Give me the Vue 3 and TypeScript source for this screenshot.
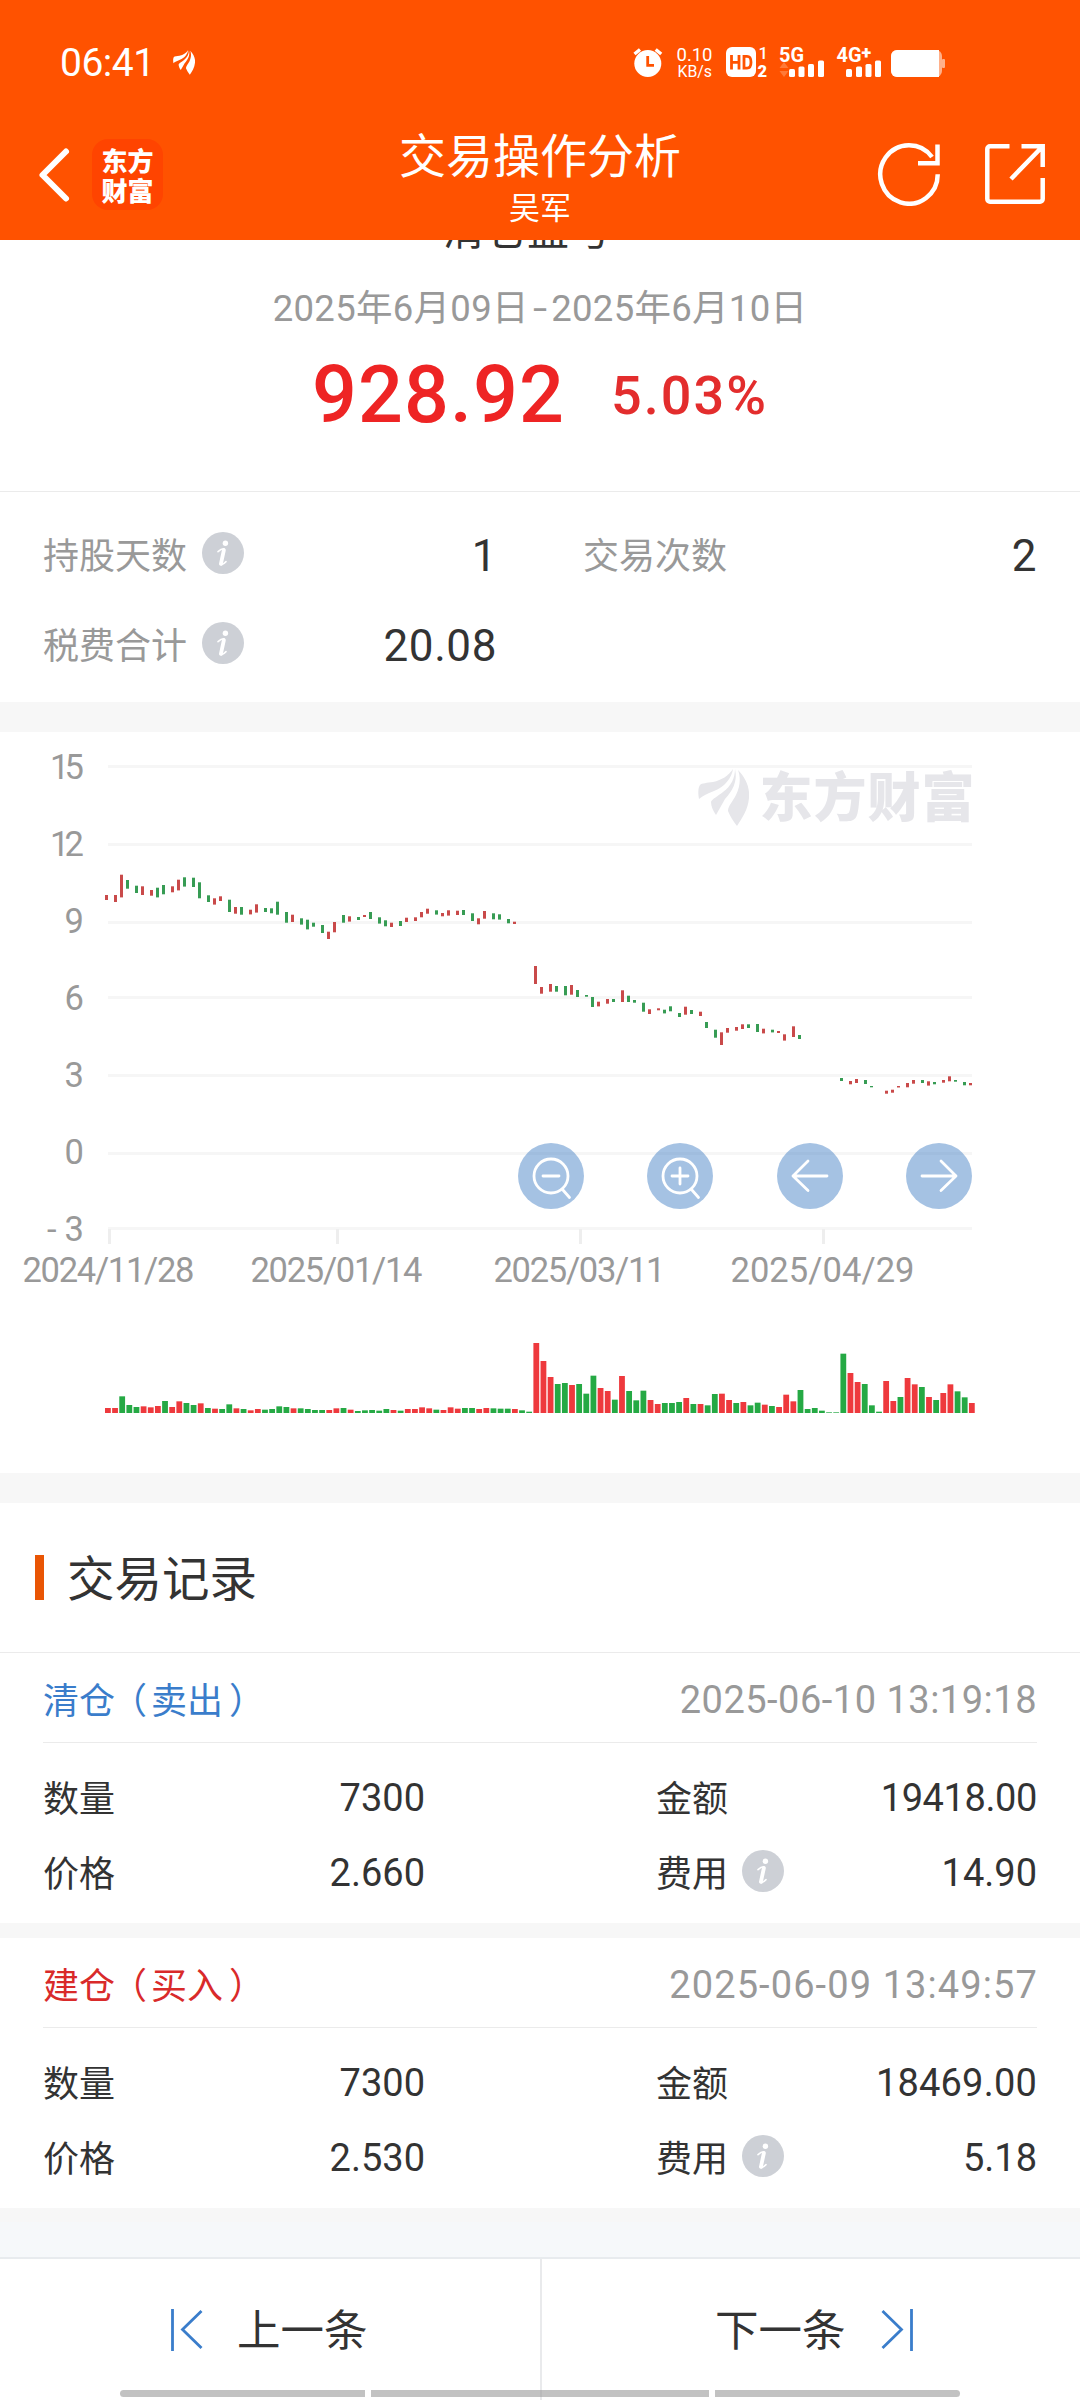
<script setup lang="ts">
type Tone = 'r' | 'g'

interface Axis { y: number; base: number; label: string; width: number }
interface Tick { x: number; label: string; width: number }
interface TradeRecord {
  kind: 'sell' | 'buy'
  title: string
  side: string
  time: string
  count: string
  amount: string
  price: string
  fee: string
}

const axes: Axis[] = [
  { y: 33, base: 46.5, label: '15', width: 34 },
  { y: 111, base: 123.5, label: '12', width: 34 },
  { y: 189, base: 201, label: '9', width: 0 },
  { y: 264, base: 277.5, label: '6', width: 0 },
  { y: 342, base: 354.5, label: '3', width: 0 },
  { y: 420, base: 431.5, label: '0', width: 0 },
  { y: 495, base: 509, label: '-3', width: 37 },
]

const ticks: Tick[] = [
  { x: 108, label: '2024/11/28', width: 172 },
  { x: 336, label: '2025/01/14', width: 172 },
  { x: 579, label: '2025/03/11', width: 172 },
  { x: 822, label: '2025/04/29', width: 184 },
]

// Each candle: left, top, height, tone
const candleData = `105 163 5 r;114 163 7 r;120 142.7 22.7 r;126 148 8.7 g;135 153.7 7.3 g;141 154.3 8.7 r;150 158 5.7 r;156 155.7 9.7 g;162 153 9.3 g;171 154.3 6 r;177 147.7 10.7 r;183 145.3 9.3 g;192 145.7 9.3 g;198 150.3 16 g;207 163.3 6.7 g;213 166.3 6.3 r;219 164.3 4.7 r;228 167.7 12.3 g;234 175 6.7 r;240 175 7.7 g;249 177.7 4.7 r;255 172.3 8.3 r;264 176 4 g;270 176.3 5 g;276 169.7 13 g;285 180 10.7 g;291 182.7 7.3 r;300 186.3 6.3 g;306 187.7 9.7 g;312 190.7 4 g;321 193 8 g;327 199.7 7.3 r;333 190 10.3 r;342 183 7.7 g;348 184.3 5.3 r;357 185 3 g;363 183 2 r;369 180 7 g;378 185.3 6.3 g;384 188.3 6 g;390 190.7 4.3 r;399 189 5 g;405 185.7 4.3 r;414 185.3 3.7 r;420 180 5.3 r;426 176.7 5 r;435 178.3 4.3 g;441 181 3.3 r;447 178.3 5.3 r;456 178.7 4.3 r;462 178 5 g;471 181.3 7.7 g;477 186.3 6 r;483 179 7.7 r;492 181.3 6 g;498 182.3 5.3 g;507 187 4.3 g;513 189.7 2.3 r;534 234 18 r;540 255 6.7 r;549 252 7.7 r;555 254 5.7 g;564 254 9.3 g;570 253 9.7 r;576 258 7 g;585 263 1.7 g;591 265 10 g;597 269.7 4.7 r;606 267 4.7 r;612 267 3 g;621 258.3 11.7 r;627 263.7 6.3 g;633 268 2.7 g;642 270.7 9 g;648 277.3 4.7 r;657 276.3 2 r;663 277.7 3.7 g;669 274.3 5 g;678 281 4 g;684 274.7 8 r;690 278 4 g;699 279.7 4.3 r;705 290 6 g;714 297.7 8 g;720 300.3 12.7 r;726 296 4.7 r;735 295 3.7 r;741 292.3 4.7 r;747 292.3 3.7 g;756 292 8 g;762 296.7 4.7 r;771 297.7 2.7 g;777 299 2 r;783 302.3 6.3 r;792 294.3 10.7 r;798 303 4 g;840 346 3 g;849 349 3.3 r;855 347 4 r;864 348 4 g;870 354 1.3 g;885 358.7 3 r;891 357.7 3 r;897 354 1.5 r;906 351 4.3 r;912 348 3.7 r;921 348 3 g;927 349.3 4.3 r;933 350 2.3 g;942 348 2.7 r;948 344.3 5 r;954 348 1.7 g;963 350 3.3 g;969 351 2.3 r`

const candles = candleData.split(';').map((row) => {
  const [x, y, h, tone] = row.split(' ')
  return { x: Number(x), y: Number(y), h: Number(h), tone: tone as Tone }
})

// Volume bars at a constant pitch; values are thirds of a pixel
const volumeData = '15r 15r 50g 24g 18g 20r 17r 21r 36g 18r 35r 30g 24g 29r 15g 13r 12g 26g 14r 12g 8r 12r 10g 12g 20g 18g 14r 14g 12g 9g 9g 9r 14r 15g 10r 6g 8g 9g 7g 12g 9r 7g 12r 12r 17r 14r 10g 9r 17r 13r 15g 15g 12r 15r 14g 13g 13g 12r 8g 4g 210r 156r 108r 87g 90g 84r 87g 58g 112g 75r 66r 40g 111r 66g 38g 67g 39r 27r 30g 30g 33g 45r 27g 27r 23g 57g 58r 39r 30g 33r 23g 31g 25r 21g 18r 55r 35r 69g 12g 15g 7g 2g 2g 178g 120r 93r 87g 23g 4g 96r 36r 48g 105r 86r 78g 48r 39g 60r 86r 65g 47g 30r'

const volumes = volumeData.split(' ').map((item, i) => {
  const h = Number(item.slice(0, -1)) / 3
  return { x: 105 + i * 7.14, y: 681 - h, h, tone: item.slice(-1) as Tone }
})

const fills: Record<Tone, string> = { r: '#c94a4a', g: '#379c54' }
const volumeFills: Record<Tone, string> = { r: '#ee393d', g: '#25a944' }

const records: TradeRecord[] = [
  { kind: 'sell', title: '清仓', side: '卖出', time: '2025-06-10 13:19:18', count: '7300', amount: '19418.00', price: '2.660', fee: '14.90' },
  { kind: 'buy', title: '建仓', side: '买入', time: '2025-06-09 13:49:57', count: '7300', amount: '18469.00', price: '2.530', fee: '5.18' },
]

const tools = ['minus', 'plus', 'left', 'right']
</script>

<template>
  <div class="screen">
    <svg width="0" height="0" class="defs">
      <symbol id="info" viewBox="0 0 42 42">
        <circle cx="21" cy="21" r="21" fill="#cdd0d6" />
        <circle cx="23.4" cy="11.3" r="2.7" fill="#fff" />
        <path d="M16 19.6C18.4 17.4 20.3 16.6 22 16.8L18.7 31.4C18.5 33.4 20.4 33.2 24 29.6" fill="none" stroke="#fff" stroke-width="1.6" stroke-linecap="round" stroke-linejoin="round" />
        <path d="M21.9 18L18.9 31.8" fill="none" stroke="#fff" stroke-width="3.8" stroke-linecap="round" />
      </symbol>
      <symbol id="wing" viewBox="0 0 51 57">
        <path d="M35 0C34 8 27 18 16 22C9 25 4 27 1 30C0 24 0 19 2 16C4 14 9 14 15 13C24 11 30 7 35 0Z" />
        <path d="M37 0C40 13 34 22 27 30C24 35 21 41 18 46C15 42 13 37 13 33C14 30 20 27 25 23C33 17 37 9 37 0Z" />
        <path d="M40 1C48 9 52 19 51 29C50 41 44 49 39 57C35 52 32 47 30 42C30 37 35 32 38 26C42 18 43 9 40 1Z" />
      </symbol>
    </svg>

    <header class="header">
      <div class="status">
        <span class="clock">06:41</span>
        <svg class="brand-mark" width="22" height="25"><use href="#wing" fill="#fff" /></svg>
        <svg class="status-icons" width="320" height="40" viewBox="630 43 320 40" fill="#fff">
          <circle cx="647.8" cy="63.5" r="13.5" />
          <path d="M634.5 54L640 49.5M661.2 54L655.7 49.5" stroke="#fff" stroke-width="3.4" />
          <path d="M647.7 56V65.3H654" fill="none" stroke="#ff5200" stroke-width="2.8" />
          <text x="676.5" y="61" font-size="19" textLength="36" lengthAdjust="spacingAndGlyphs">0.10</text>
          <text x="677.5" y="77" font-size="16" textLength="34.5" lengthAdjust="spacingAndGlyphs">KB/s</text>
          <rect x="726" y="47" width="30" height="30" rx="6" />
          <path d="M731.5 55V69.5M739 55V69.5M731.5 62.3H739M744 56.3H747C750 56.3 751 58 751 62.3C751 66.5 750 68.2 747 68.2H744Z" fill="none" stroke="#ff5200" stroke-width="2.8" />
          <text x="758.5" y="59" font-size="16.5" font-weight="500">1</text>
          <text x="757.5" y="77" font-size="16.5" font-weight="900">2</text>
          <text x="779" y="61.5" font-size="20" font-weight="700" textLength="25" lengthAdjust="spacingAndGlyphs">5G</text>
          <path d="M784 62L788.5 68H779.5ZM784 77L788.5 71H779.5Z" fill="#ff7a38" />
          <rect x="789" y="69" width="6" height="8" rx="1.5" /><rect x="798.5" y="66.5" width="6" height="10.5" rx="1.5" />
          <rect x="808" y="64" width="6" height="13" rx="1.5" /><rect x="818" y="60.5" width="6" height="16.5" rx="1.5" />
          <text x="836.5" y="61.5" font-size="20" font-weight="700" textLength="25" lengthAdjust="spacingAndGlyphs">4G</text>
          <text x="861.5" y="58.5" font-size="18" font-weight="900">+</text>
          <rect x="846" y="69" width="6" height="8" rx="1.5" /><rect x="856" y="66.5" width="6" height="10.5" rx="1.5" />
          <rect x="865.5" y="64" width="6" height="13" rx="1.5" /><rect x="875" y="60.5" width="6" height="16.5" rx="1.5" />
          <rect x="891" y="50" width="51" height="27" rx="6" fill="#ffb08a" />
          <rect x="942" y="59" width="3" height="9" rx="1" fill="#ffb08a" />
          <path d="M897 50H939V77H897A6 6 0 0 1 891 71V56A6 6 0 0 1 897 50Z" />
        </svg>
      </div>
      <div class="nav">
        <div class="nav-side">
          <svg class="back" width="34" height="58" viewBox="0 0 34 58"><path d="M29 5.5L5.500 29L29 52.5" fill="none" stroke="#fff" stroke-width="6" stroke-linecap="round" stroke-linejoin="round" /></svg>
          <div class="logo"><span>东方</span><span>财富</span></div>
        </div>
        <div class="titles">
          <h1>交易操作分析</h1>
          <p>吴军</p>
        </div>
        <div class="nav-side actions">
          <svg width="64" height="64" viewBox="0 0 64 64" fill="none" stroke="#fff" stroke-width="4.5">
            <path d="M60.7 32.2A28.7 29.2 0 1 1 55 15" />
            <path d="M60.5 2.5V21.3H41" />
          </svg>
          <svg width="60" height="60" viewBox="0 0 60 60" fill="none" stroke="#fff" stroke-width="4.5">
            <path d="M24.5 2.3H5A2.7 2.7 0 0 0 2.300 5V55A2.7 2.7 0 0 0 5 57.7H55A2.7 2.7 0 0 0 57.7 55V34M36.5 2.3H57.7V23M57 3L26 35" />
          </svg>
        </div>
      </div>
    </header>

    <section class="summary">
      <div class="summary-title">清仓盈亏</div>
      <div class="period">2025年6月09日<i>-</i>2025年6月10日</div>
      <div class="profit"><span class="value">928.92</span><span class="rate">5.03%</span></div>
    </section>

    <section class="metrics">
      <div class="metric"><span>持股天数</span><svg class="info"><use href="#info" /></svg><b>1</b></div>
      <div class="metric"><span>交易次数</span><b>2</b></div>
      <div class="metric"><span>税费合计</span><svg class="info"><use href="#info" /></svg><b>20.08</b></div>
    </section>

    <section class="chart">
      <svg width="1080" height="741" viewBox="0 0 1080 741">
        <rect v-for="a in axes" :key="a.label" x="108" :y="a.y" width="864" height="3" fill="#f6f6f6" />
        <g fill="#999" font-size="34.5">
          <text v-for="a in axes" :key="a.label" x="84" :y="a.base" text-anchor="end" :textLength="a.width || undefined">{{ a.label }}</text>
          <text v-for="t in ticks" :key="t.label" :x="t.x + 0.5 - t.width / 2" y="550" :textLength="t.width">{{ t.label }}</text>
        </g>
        <rect v-for="t in ticks" :key="t.label" :x="t.x" y="497" width="3" height="15" fill="#eee" />
        <svg x="698" y="37" width="51" height="57" fill="#e6e6ea"><use href="#wing" /></svg>
        <text class="watermark" x="759.5" y="85" textLength="215" fill="#e6e6ea">东方财富</text>
        <rect v-for="(c, i) in candles" :key="'c' + i" :x="c.x" :y="c.y" width="3" :height="c.h" :fill="fills[c.tone]" />
        <rect v-for="(v, i) in volumes" :key="'v' + i" :x="v.x" :y="v.y" width="5.8" :height="v.h" :fill="volumeFills[v.tone]" />
      </svg>
      <div class="tools">
        <button v-for="t in tools" :key="t" type="button">
          <svg width="66" height="66" viewBox="0 0 66 66" fill="none" stroke="#fff" stroke-width="2.8" stroke-linecap="round" stroke-linejoin="round">
            <template v-if="t === 'minus' || t === 'plus'">
              <circle cx="33" cy="33" r="17" />
              <path d="M25 33H41M44.5 46.5L51.500 54.5" />
              <path v-if="t === 'plus'" d="M33 25V41" />
            </template>
            <path v-else-if="t === 'left'" d="M50 33H16M31 18L16 33L31 47.5" />
            <path v-else d="M16 33H50M35 18L50 33L35 47.5" />
          </svg>
        </button>
      </div>
    </section>

    <section class="records">
      <h2><span>交易记录</span></h2>
      <article v-for="r in records" :key="r.time" class="record" :class="r.kind">
        <div class="record-head">
          <span class="kind">{{ r.title }}<i class="open">（</i>{{ r.side }}<i class="close">）</i></span>
          <time>{{ r.time }}</time>
        </div>
        <div class="record-body">
          <div class="cell"><span>数量</span><b>{{ r.count }}</b></div>
          <div class="cell"><span>金额</span><b class="amount">{{ r.amount }}</b></div>
          <div class="cell"><span>价格</span><b>{{ r.price }}</b></div>
          <div class="cell"><span>费用</span><svg class="info"><use href="#info" /></svg><b>{{ r.fee }}</b></div>
        </div>
      </article>
    </section>

    <footer class="pager">
      <div class="page prev">
        <svg width="32" height="42" viewBox="0 0 32 42" fill="none" stroke="#3a7dcb" stroke-width="2.8"><path d="M1.5 0V42M30.5 2L11.5 20.5L30.5 39" /></svg>
        <span>上一条</span>
      </div>
      <div class="page next">
        <span>下一条</span>
        <svg width="32" height="42" viewBox="0 0 32 42" fill="none" stroke="#3a7dcb" stroke-width="2.8"><path d="M30.5 0V42M1.5 2L20.5 20.5L1.5 39" /></svg>
      </div>
      <div class="gesture"><i /><i /><i /></div>
    </footer>
  </div>
</template>

<style>
body { margin: 0; background: #fff; }
</style>

<style scoped>
.screen {
  width: 1080px;
  height: 2400px;
  overflow: hidden;
  display: flex;
  flex-direction: column;
  background: #f6f8fa;
  color: #333;
  font-family: Roboto, "Noto Sans CJK SC", sans-serif;
}
.defs { position: absolute; }
h1, h2, p { margin: 0; font-weight: 400; }
b, i { font-weight: 400; font-style: normal; }
.info { width: 42px; height: 42px; }

.header { position: relative; z-index: 1; flex: none; height: 240px; background: #ff5200; color: #fff; }
.status { height: 124px; box-sizing: border-box; padding: 41px 130px 0 60px; display: flex; }
.clock { width: 91px; height: 44px; line-height: 44px; font-size: 39px; letter-spacing: -0.5px; white-space: nowrap; }
.brand-mark { margin: 9px 0 0 22px; }
.status-icons { margin: 2px 0 0 auto; }
.nav { height: 116px; display: flex; justify-content: space-between; }
.nav-side { width: 206px; display: flex; }
.back { margin: 22px 21px 0 37px; }
.logo {
  width: 71px; height: 71px; margin-top: 15px; border-radius: 16px; background: #ff4400;
  display: flex; flex-direction: column; align-items: center; justify-content: center;
  font-family: "Noto Sans CJK SC", sans-serif; font-weight: 900; font-size: 26px; line-height: 30px;
}
.titles { text-align: center; padding-top: 2px; }
h1 { height: 62px; line-height: 62px; font-size: 47px; }
.titles p { height: 42px; line-height: 42px; font-size: 31px; }
.actions { gap: 46px; padding: 18px 0 0 3px; box-sizing: border-box; }
.actions svg { flex: none; }
.actions svg:last-child { margin-top: 2px; margin-left: -2px; }

.summary { flex: none; height: 251px; background: #fff; border-bottom: 1px solid #ebebeb; text-align: center; }
.summary-title { height: 40px; margin-top: -29px; line-height: 40px; font-size: 42px; padding-right: 26px; }
.period { height: 50px; margin-top: 33px; line-height: 50px; font-size: 36.5px; color: #999; letter-spacing: 0.3px; }
.period i { display: inline-block; margin: 0 6px; transform: scaleX(1.4); }
.profit { height: 80px; margin-top: 21px; display: flex; justify-content: center; align-items: center; gap: 46px; font-weight: 500; }
.value { font-size: 79px; color: #ee2424; letter-spacing: 1.1px; }
.rate { font-size: 54px; color: #e32d2d; letter-spacing: 2px; }

.metrics {
  flex: none; height: 210px; box-sizing: border-box; padding: 18px 43px 12px; background: #fff;
  display: grid; grid-template-columns: 454px 454px; grid-template-rows: 90px 90px; column-gap: 86px;
}
.metric { display: flex; align-items: center; font-size: 36px; color: #999; }
.metric span { margin-top: -4px; }
.metric .info { margin: -4px 0 0 15px; }
.metric b { margin-left: auto; padding-top: 2px; color: #333; font-size: 44px; letter-spacing: 0.6px; }

.chart { flex: none; position: relative; height: 741px; background: #fff; border-top: 30px solid #f7f7f7; border-bottom: 30px solid #f7f7f7; }
.chart > svg { display: block; }
.watermark { font-family: "Noto Sans CJK SC", sans-serif; font-size: 53px; font-weight: 900; }
.tools { position: absolute; left: 518px; top: 411px; width: 454px; display: flex; justify-content: space-between; }
.tools button { width: 66px; height: 66px; padding: 0; border: 0; border-radius: 50%; background: rgba(63, 125, 195, 0.47); }
.tools svg { display: block; }

.records { flex: none; height: 719px; background: #f7f7f7; }
h2 {
  height: 149px; padding-left: 35px; background: #fff; border-bottom: 1px solid #ebebeb;
  font-size: 47.5px; display: flex; align-items: center;
}
h2::before { content: ""; width: 9px; height: 45px; margin-right: 23px; background: #e95504; }
h2 span { line-height: 60px; padding-top: 4px; }
.record { height: 270px; margin-bottom: 15px; background: #fff; }
.record-head {
  height: 90px; margin: 0 43px; padding-top: 3px; box-sizing: border-box; border-bottom: 1px solid #ebebeb;
  display: flex; align-items: center; justify-content: space-between; font-size: 36px;
}
.kind { margin-top: -3px; }
.kind .open { margin: 0 4px 0 -4px; }
.kind .close { margin-left: 6px; }
.sell .kind { color: #3a7dcb; }
.buy .kind { color: #d92a2a; }
time { padding-top: 2px; color: #999; font-size: 38px; letter-spacing: 0.5px; }
.buy time { letter-spacing: 1.1px; margin-right: -1px; }
.record-body {
  padding: 17px 43px 0; display: grid; grid-template-columns: 382px 381px; grid-template-rows: 75px 75px;
  column-gap: 231px;
}
.cell { display: flex; align-items: center; font-size: 36px; }
.cell span { margin-top: -3px; }
.cell .info { margin: -3px 0 0 14px; }
.cell b { margin-left: auto; padding-top: 1px; font-size: 38px; }
.sell .amount { letter-spacing: -0.4px; }
.buy .amount { letter-spacing: 0.2px; }

.pager { position: relative; flex: none; height: 141px; margin-top: auto; display: flex; background: #fff; border-top: 2px solid #e8ebee; }
.page { width: 538px; box-sizing: border-box; display: flex; align-items: center; font-size: 43.5px; }
.page span { line-height: 60px; padding-top: 4px; }
.prev { width: 542px; padding-left: 171px; gap: 34px; border-right: 2px solid #e9eaec; }
.next { padding-left: 173px; gap: 35px; }
.gesture { position: absolute; left: 120px; bottom: 3px; width: 840px; height: 7px; display: flex; gap: 6px; }
.gesture i { flex: 0 0 245px; background: rgba(150, 150, 150, 0.58); }
.gesture i:nth-child(2) { flex: 1; }
.gesture i:first-child { border-radius: 4px 0 0 4px; }
.gesture i:last-child { border-radius: 0 4px 4px 0; }
</style>
